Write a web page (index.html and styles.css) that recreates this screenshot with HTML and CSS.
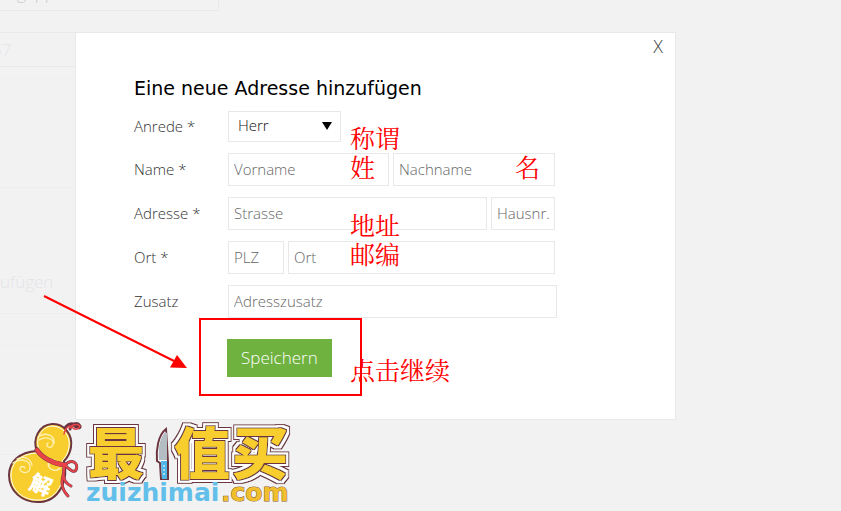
FILE: index.html
```html
<!DOCTYPE html>
<html lang="de">
<head>
<meta charset="utf-8">
<meta name="viewport" content="width=device-width, initial-scale=1">
<title>Eine neue Adresse hinzufügen</title>
<link rel="stylesheet" href="styles.css">
</head>
<body>
<div class="page" aria-hidden="true">
  <div class="page-field page-top">g&nbsp; pp</div>
  <div class="page-field page-number">67</div>
  <div class="page-line"></div>
  <div class="page-block"></div>
  <div class="page-block page-action">ufügen</div>
  <div class="page-line page-foot"></div>
  <div class="page-block"></div>
</div>

<main class="modal" role="dialog" aria-labelledby="dialog-title">
  <button class="close" type="button" aria-label="Schließen">X</button>
  <h1 id="dialog-title">Eine neue Adresse hinzufügen</h1>
  <form>
    <div class="row">
      <label for="anrede">Anrede *</label>
      <div class="select">
        <select id="anrede"><option>Herr</option><option>Frau</option></select>
      </div>
    </div>
    <div class="row">
      <label for="vorname">Name *</label>
      <div class="fields fields-name">
        <input id="vorname" type="text" placeholder="Vorname">
        <input type="text" placeholder="Nachname" aria-label="Nachname">
      </div>
    </div>
    <div class="row">
      <label for="strasse">Adresse *</label>
      <div class="fields fields-street">
        <input id="strasse" type="text" placeholder="Strasse">
        <input type="text" placeholder="Hausnr." aria-label="Hausnummer">
      </div>
    </div>
    <div class="row">
      <label for="plz">Ort *</label>
      <div class="fields fields-city">
        <input id="plz" type="text" placeholder="PLZ">
        <input type="text" placeholder="Ort" aria-label="Ort">
      </div>
    </div>
    <div class="row">
      <label for="zusatz">Zusatz</label>
      <div class="fields fields-extra">
        <input id="zusatz" type="text" placeholder="Adresszusatz">
      </div>
    </div>
    <button class="save" type="submit">Speichern</button>
  </form>
</main>

<div class="notes" lang="zh-CN">
  <svg class="marks" width="400" height="410" viewBox="0 0 400 410" aria-hidden="true">
    <rect x="200" y="319" width="161" height="76" fill="none" stroke="#f00" stroke-width="2"/>
    <path d="M44 296L174 361" stroke="#f00" stroke-width="2"/>
    <path d="M177 355L187 368L170 367.500Z" fill="#f00"/>
  </svg>
  <p class="note note-title">称谓<br>姓</p>
  <p class="note note-name">名</p>
  <p class="note note-place">地址<br>邮编</p>
  <p class="note note-save">点击继续</p>
</div>

<svg class="logo" width="300" height="96" viewBox="0 0 300 96" role="img" aria-label="最值买 zuizhimai.com">
  <defs>
    <filter id="outline" x="-10%" y="-10%" width="120%" height="120%">
      <feMorphology in="SourceAlpha" operator="dilate" radius="4" result="a4"/>
      <feMorphology in="SourceAlpha" operator="dilate" radius="3" result="a3"/>
      <feMorphology in="SourceAlpha" operator="dilate" radius="1" result="a1"/>
      <feFlood flood-color="#6b3540" result="dark"/>
      <feFlood flood-color="#fff" result="light"/>
      <feComposite in="dark" in2="a4" operator="in" result="l4"/>
      <feComposite in="light" in2="a3" operator="in" result="l3"/>
      <feComposite in="dark" in2="a1" operator="in" result="l1"/>
      <feMerge>
        <feMergeNode in="l4"/><feMergeNode in="l3"/><feMergeNode in="l1"/><feMergeNode in="SourceGraphic"/>
      </feMerge>
    </filter>
  </defs>
  <path d="M63 20C63 13 68 8 73 9C76 13 81 14 80 11C77 6 70 10 70 14" fill="#fff" stroke="#6b3540" stroke-width="3" stroke-linecap="round"/>
  <path d="M37 36C32 24 39 10 52 9C64 8 73 20 71 32C70 39 67 43 64 46C69 65 59 86 40 87C22 88 9 76 9 60C9 47 19 37 37 36Z" fill="#f8cd2e" stroke="#6b3540" stroke-width="2"/>
  <path d="M39 34C35 24 41 12 52 11C63 11 71 21 69 32C68 38 66 42 62 46C67 65 57 85 40 85C23 86 11 75 11 60C11 48 21 38 39 38" fill="none" stroke="#fff" stroke-width="1"/>
  <g fill="none" stroke="#fff2b8" stroke-width="1.300" stroke-linecap="round">
    <path d="M39 25C47 20 55 25 53 30C51 35 44 31 48 28M38 22C46 16 55 21 54 28"/>
    <path d="M13 48C21 42 31 46 30 53C29 60 19 58 20 53C21 51 24 51 25 53M17 44C24 40 31 44 32 50"/>
    <path d="M49 51C48 43 57 43 57 49M48 49C49 56 57 57 60 53"/>
  </g>
  <g fill="none" stroke-linecap="round" stroke-linejoin="round">
    <path stroke="#6b3540" stroke-width="5" d="M37 35C42 43 54 49 65 50"/>
    <path stroke="#6b3540" stroke-width="3" d="M65 50C72 43 79 48 76 55C73 59 69 53 64 50C64 58 61 66 71 71M64 51C66 59 56 68 68 81"/>
    <g stroke="#e9434a">
      <path stroke-width="4" d="M37 35C42 43 54 49 65 50"/>
      <path stroke-width="2" d="M65 50C72 43 79 48 76 55C73 59 69 53 64 50C64 58 61 66 71 71M64 51C66 59 56 68 68 81"/>
      <path stroke-width="1.500" d="M64 19C65 13 69 10 72 12C75 16 79 14 80 11C77 8 71 10 70 13"/>
    </g>
  </g>
  <text class="logo-seal" x="30" y="78" transform="rotate(22 41 70)">解</text>
  <text class="logo-name" x="88 174 232" y="59" filter="url(#outline)">最值买</text>
  <path d="M166 14C158 20 156 35 157 46L160 48L161 64H168V47Z" fill="#fff" stroke="#6b3540" stroke-width="2"/>
  <path d="M165 17C159 24 158 35 159 45H167V18Z" fill="#b5bdc4"/>
  <path d="M161 46H167V64H162Z" fill="#4fb7e8"/>
  <path d="M164 50V61" stroke="#fff" stroke-dasharray="2 2"/>
  <text class="logo-url" x="86" y="86">zuizhimai</text>
  <text class="logo-url logo-tld" x="221" y="86">.com</text>
</svg>
</body>
</html>
```
FILE: styles.css
```css
* { box-sizing: border-box; }

body {
  position: relative;
  margin: 0;
  min-height: 100vh;
  overflow: hidden;
  background: #f2f2f2;
  color: #333;
  font: 300 16px/24px "Open Sans", "Noto Sans", sans-serif;
}

/* Dimmed page behind the dialog */
.page {
  display: flow-root;
  color: #e4e4e8;
  font-size: 17px;
}
.page-field { border: 1px solid #eaeaea; border-left: 0; }
.page-top {
  width: 219px;
  height: 19px;
  margin-top: -8px;
  padding-left: 17px;
  border-top: 0;
  line-height: 1px;
  color: #ccc;
}
.page-number {
  width: 80px;
  height: 35px;
  margin-top: 21px;
  line-height: 34px;
  text-indent: -8px;
}
.page-line { width: 80px; height: 12px; border-bottom: 1px solid #efefef; }
.page-block { width: 80px; height: 109px; border-bottom: 1px solid #eee; }
.page-action { height: 126px; padding-top: 82px; }
.page-foot { height: 32px; }

.modal {
  position: absolute;
  top: 32px;
  left: 75px;
  width: 601px;
  max-width: calc(100% - 75px);
  padding: 42px 58px;
  border: 1px solid #e9e9e9;
  background: #fff;
}
.close {
  position: absolute;
  top: 1px;
  right: 12px;
  padding: 0;
  border: 0;
  background: none;
  color: #444;
  font: inherit;
  font-size: 18px;
}
h1 {
  margin: 0 0 9px;
  color: #000;
  font: 400 19px/27px "DejaVu Sans", sans-serif;
}

form {
  display: flex;
  flex-direction: column;
  gap: 11px;
}
.row {
  display: grid;
  grid-template-columns: 94px minmax(0, 329px);
  align-items: center;
}
label { padding-bottom: 2px; font-size: 15px; }
.fields {
  display: grid;
  gap: 4px;
  padding-right: 2px;
}
.fields-name { grid-template-columns: 161px 1fr; }
.fields-street { grid-template-columns: 1fr 64px; }
.fields-city { grid-template-columns: 56px 1fr; }
.fields-extra { padding-right: 0; }

input, select {
  width: 100%;
  height: 33px;
  margin: 0;
  border: 1px solid #e8e8e8;
  border-radius: 0;
  background: #fff;
  color: #111;
  font: inherit;
  font-size: 15px;
}
input { min-width: 0; padding: 0 5px 2px; }
input::placeholder { color: #666; opacity: 1; }
.select { position: relative; width: 113px; }
select {
  display: block;
  height: 31px;
  padding: 0 9px 3px;
  appearance: none;
}
.select::after {
  content: "";
  position: absolute;
  top: 11px;
  right: 9px;
  border: solid transparent;
  border-width: 8px 5px 0;
  border-top-color: #000;
  pointer-events: none;
}
.save {
  align-self: flex-start;
  height: 38px;
  margin: 10px 0 0 93px;
  padding: 0 14px;
  border: 0;
  background: #70b23f;
  color: #fff;
  font: inherit;
  font-size: 17px;
}

/* Red notes drawn over the dialog */
.notes { position: absolute; inset: 0; pointer-events: none; }
.marks { position: absolute; top: 0; left: 0; }
.note {
  position: absolute;
  left: 350px;
  margin: 0;
  color: #f00;
  font: 400 25px/29px "Noto Serif CJK SC", "Noto Sans CJK SC", serif;
}
.note-title { top: 123px; }
.note-name { top: 152px; left: 515px; }
.note-place { top: 210px; }
.note-save { top: 355px; }

.logo { position: absolute; top: 415px; left: 0; }
.logo-name { fill: #f8cd2e; font: 900 56px "Noto Sans CJK SC", sans-serif; }
.logo-seal { fill: #fff; font: 900 22px "Noto Sans CJK SC", sans-serif; }
.logo-url { fill: #62bfea; font: 700 25px "DejaVu Sans", sans-serif; }
.logo-tld { fill: #f0bf2b; stroke: #8b5a3a; stroke-width: 1px; paint-order: stroke; }
```
